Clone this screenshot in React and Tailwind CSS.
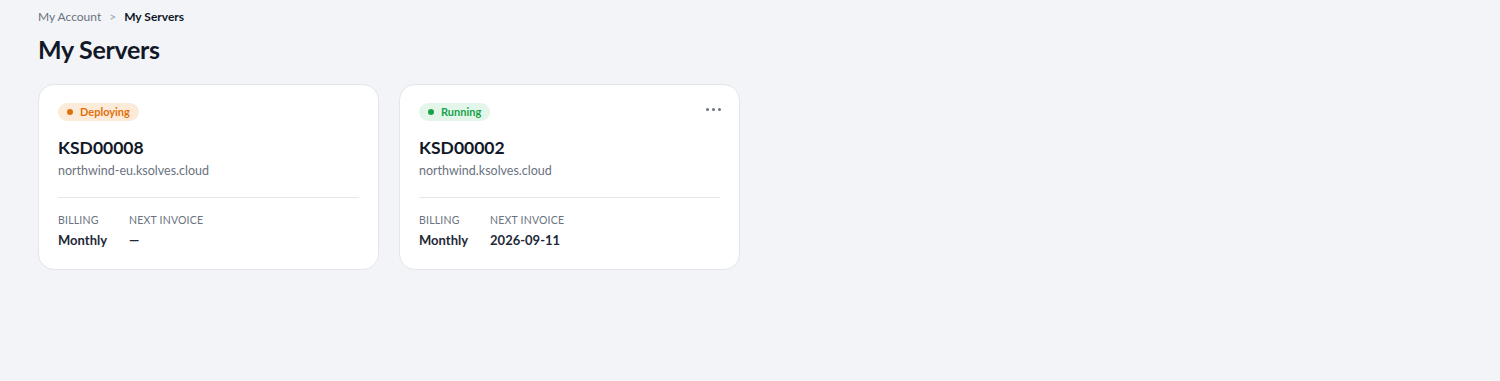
import React from 'react';

const servers = [
  {
    id: 'KSD00008',
    host: 'northwind-eu.ksolves.cloud',
    status: 'Deploying',
    billing: 'Monthly',
    nextInvoice: '—',
    menu: false,
  },
  {
    id: 'KSD00002',
    host: 'northwind.ksolves.cloud',
    status: 'Running',
    billing: 'Monthly',
    nextInvoice: '2026-09-11',
    menu: true,
  },
];

function StatusBadge({ status }) {
  const running = status === 'Running';
  return (
    <div className="flex">
      <span
        className={
          running
            ? 'flex items-center gap-[7px] h-[18px] pl-[9px] pr-[9px] rounded-full bg-[#e4f6ea] text-[#16a34a] text-[11px] leading-[14px] font-bold'
            : 'flex items-center gap-[7px] h-[18px] pl-[9px] pr-[9px] rounded-full bg-[#fcebd9] text-[#e0700b] text-[11px] leading-[14px] font-bold'
        }
      >
        <span className={running ? 'w-[6px] h-[6px] rounded-full bg-[#16a34a]' : 'w-[6px] h-[6px] rounded-full bg-[#e0700b]'} />
        {status}
      </span>
    </div>
  );
}

function ServerCard({ server }) {
  return (
    <div className="relative w-[341px] h-[186px] bg-white border border-[#e3e5ea] rounded-[16px] px-[19px] pt-[18px]">
      {server.menu && (
        <button className="absolute right-[18px] top-[23px] flex gap-[3px]">
          <span className="w-[3px] h-[3px] rounded-full bg-[#6b7280]" />
          <span className="w-[3px] h-[3px] rounded-full bg-[#6b7280]" />
          <span className="w-[3px] h-[3px] rounded-full bg-[#6b7280]" />
        </button>
      )}
      <StatusBadge status={server.status} />
      <h2 className="mt-[16px] text-[17.5px] leading-[22px] font-bold text-[#111827]">{server.id}</h2>
      <p className="mt-[4px] text-[12.5px] leading-[16px] text-[#6b7280]">{server.host}</p>
      <div className="mt-[18px] border-t border-[#e5e7eb]" />
      <div className="mt-[15px] flex gap-[22px]">
        <div>
          <div className="text-[10.5px] leading-[14px] tracking-[0.2px] text-[#6b7280] uppercase">Billing</div>
          <div className="mt-[5px] text-[13px] leading-[16px] font-bold text-[#1f2937]">{server.billing}</div>
        </div>
        <div>
          <div className="text-[10.5px] leading-[14px] tracking-[0.2px] text-[#6b7280] uppercase">Next Invoice</div>
          <div className="mt-[5px] text-[13px] leading-[16px] font-bold text-[#1f2937]">{server.nextInvoice}</div>
        </div>
      </div>
    </div>
  );
}

export default function App() {
  return (
    <div className="min-h-[381px] bg-[#f3f4f7] px-[38px] pt-[9px] font-['Lato',sans-serif]">
      {/* Breadcrumb */}
      <nav className="flex items-center gap-[8px] text-[12px] leading-[16px]">
        <span className="text-[#6b7280]">My Account</span>
        <span className="text-[#9ca3af]">&gt;</span>
        <span className="font-bold text-[#111827]">My Servers</span>
      </nav>
      <h1 className="mt-[9px] text-[25px] leading-[30px] font-bold tracking-[-0.3px] text-[#111827]">My Servers</h1>

      <div className="mt-[20px] flex gap-[20px]">
        {servers.map((s) => (
          <ServerCard key={s.id} server={s} />
        ))}
      </div>
    </div>
  );
}
